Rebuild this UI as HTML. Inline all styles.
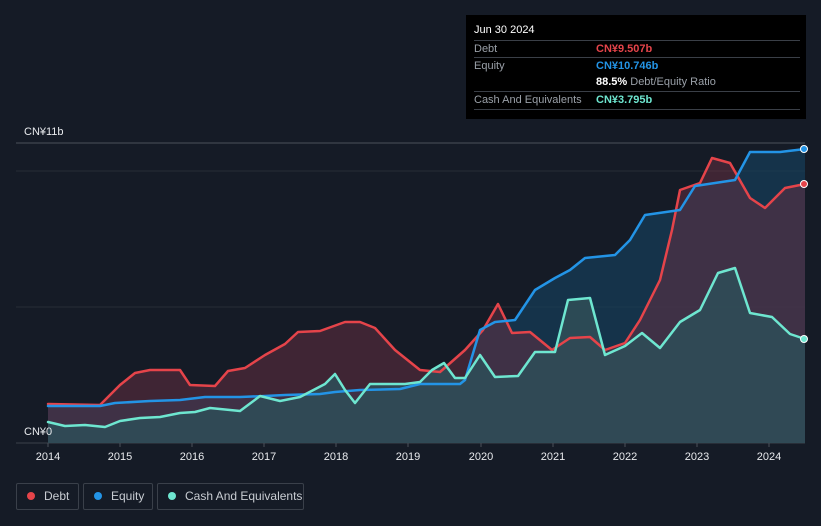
<!DOCTYPE html>
<html><head><meta charset="utf-8"><style>
html,body{margin:0;background:#151b26;width:821px;height:526px;overflow:hidden;font-family:"Liberation Sans",sans-serif;position:relative}
.tip{position:absolute;left:466px;top:15px;width:340px;height:104px;background:#000;color:#fff;font-size:11px}
.row{position:absolute;left:8px;width:326px;border-top:1px solid #3a3f47;height:17px;line-height:17px}
.l{color:#9aa0a8;position:absolute;left:0}
.v{position:absolute;left:122px;font-weight:bold;white-space:nowrap}
.leg{position:absolute;top:483px;height:27px;border:1px solid #3a404a;border-radius:2px;color:#c8ccd2;font-size:12px;line-height:25px;box-sizing:border-box;white-space:nowrap;overflow:hidden}
.dot{display:inline-block;width:8px;height:8px;border-radius:50%;margin:0 9px 0 10px;vertical-align:0px}
</style></head><body>
<svg width="821" height="526" style="position:absolute;left:0;top:0">
<line x1="16" y1="143" x2="805" y2="143" stroke="#4a505a" stroke-width="1"/>
<line x1="16" y1="171" x2="805" y2="171" stroke="#262c36"/>
<line x1="16" y1="307" x2="805" y2="307" stroke="#262c36"/>
<line x1="16" y1="443" x2="805" y2="443" stroke="#3a404a"/>
<polygon fill="#16405e" opacity="0.65" points="48,443 48,406 100,406 115,403 150,401 180,400 205,397 240,397 265,396 285,395 320,394 335,392 360,390 400,389 420,384 460,384 465,380 480,330 495,322 515,320 535,290 555,278 570,270 585,258 615,255 630,240 645,215 680,210 695,186 735,180 750,152 780,152 805,149 805,443"/>
<polygon fill="#6a3042" opacity="0.5" points="48,443 48,404 100,405 120,385 135,373 150,370 180,370 190,385 215,386 228,371 245,368 265,355 285,344 298,332 320,331 345,322 360,322 375,328 395,350 420,370 440,372 465,350 483,330 498,304 512,333 530,332 552,350 570,338 590,337 605,350 625,343 640,320 660,280 672,230 680,190 700,183 712,158 730,163 750,198 765,208 785,188 805,184 805,443"/>
<polygon fill="#2f4d57" opacity="0.9" points="48,443 48,422 65,426 85,425 105,427 120,421 140,418 160,417 180,413 195,412 210,408 240,411 260,396 280,401 300,397 325,384 335,374 345,390 355,403 370,384 405,384 420,382 432,370 444,363 455,378 465,378 480,355 495,377 518,376 535,352 555,352 568,300 590,298 605,355 625,346 642,333 660,348 680,322 700,310 718,273 735,268 750,313 772,317 790,334 805,339 805,443"/>
<g fill="none" stroke-width="2.5" stroke-linejoin="round" stroke-linecap="round">
<polyline stroke="#e5444a" points="48,404 100,405 120,385 135,373 150,370 180,370 190,385 215,386 228,371 245,368 265,355 285,344 298,332 320,331 345,322 360,322 375,328 395,350 420,370 440,372 465,350 483,330 498,304 512,333 530,332 552,350 570,338 590,337 605,350 625,343 640,320 660,280 672,230 680,190 700,183 712,158 730,163 750,198 765,208 785,188 805,184"/>
<polyline stroke="#2394e6" points="48,406 100,406 115,403 150,401 180,400 205,397 240,397 265,396 285,395 320,394 335,392 360,390 400,389 420,384 460,384 465,380 480,330 495,322 515,320 535,290 555,278 570,270 585,258 615,255 630,240 645,215 680,210 695,186 735,180 750,152 780,152 805,149"/>
<polyline stroke="#6ee6d0" points="48,422 65,426 85,425 105,427 120,421 140,418 160,417 180,413 195,412 210,408 240,411 260,396 280,401 300,397 325,384 335,374 345,390 355,403 370,384 405,384 420,382 432,370 444,363 455,378 465,378 480,355 495,377 518,376 535,352 555,352 568,300 590,298 605,355 625,346 642,333 660,348 680,322 700,310 718,273 735,268 750,313 772,317 790,334 805,339"/>
</g>
<circle cx="804" cy="149" r="3.5" fill="#2394e6" stroke="#fff" stroke-width="1"/>
<circle cx="804" cy="184" r="3.5" fill="#e5444a" stroke="#fff" stroke-width="1"/>
<circle cx="804" cy="339" r="3.5" fill="#6ee6d0" stroke="#fff" stroke-width="1"/>
<g stroke="#4a505a"><line x1="48" y1="443" x2="48" y2="447"/><line x1="120" y1="443" x2="120" y2="447"/><line x1="192" y1="443" x2="192" y2="447"/><line x1="264" y1="443" x2="264" y2="447"/><line x1="336" y1="443" x2="336" y2="447"/><line x1="408" y1="443" x2="408" y2="447"/><line x1="481" y1="443" x2="481" y2="447"/><line x1="553" y1="443" x2="553" y2="447"/><line x1="625" y1="443" x2="625" y2="447"/><line x1="697" y1="443" x2="697" y2="447"/><line x1="769" y1="443" x2="769" y2="447"/></g>
<g fill="#e8eaed" font-size="11" font-family="Liberation Sans" text-anchor="middle">
<text x="48" y="460">2014</text><text x="120" y="460">2015</text><text x="192" y="460">2016</text><text x="264" y="460">2017</text><text x="336" y="460">2018</text><text x="408" y="460">2019</text><text x="481" y="460">2020</text><text x="553" y="460">2021</text><text x="625" y="460">2022</text><text x="697" y="460">2023</text><text x="769" y="460">2024</text>
</g>
<text x="24" y="135" fill="#e8eaed" font-size="11">CN¥11b</text>
<text x="24" y="435" fill="#e8eaed" font-size="11">CN¥0</text>
</svg>
<div class="tip">
<div style="position:absolute;left:8px;top:9px;font-size:11px">Jun 30 2024</div>
<div class="row" style="top:25px"><span class="l">Debt</span><span class="v" style="color:#e5444a">CN¥9.507b</span></div>
<div class="row" style="top:42px"><span class="l">Equity</span><span class="v" style="color:#2394e6">CN¥10.746b</span></div>
<div class="row" style="top:59px;border-top:none"><span class="v" style="color:#fff">88.5% <span style="font-weight:normal;color:#9aa0a8">Debt/Equity Ratio</span></span></div>
<div class="row" style="top:76px"><span class="l">Cash And Equivalents</span><span class="v" style="color:#6ee6d0">CN¥3.795b</span></div>
<div class="row" style="top:94px;height:0"></div>
</div>
<div class="leg" style="left:16px;width:63px"><span class="dot" style="background:#e5444a"></span>Debt</div>
<div class="leg" style="left:83px;width:70px"><span class="dot" style="background:#2394e6"></span>Equity</div>
<div class="leg" style="left:157px;width:147px"><span class="dot" style="background:#6ee6d0"></span>Cash And Equivalents</div>
</body></html>
